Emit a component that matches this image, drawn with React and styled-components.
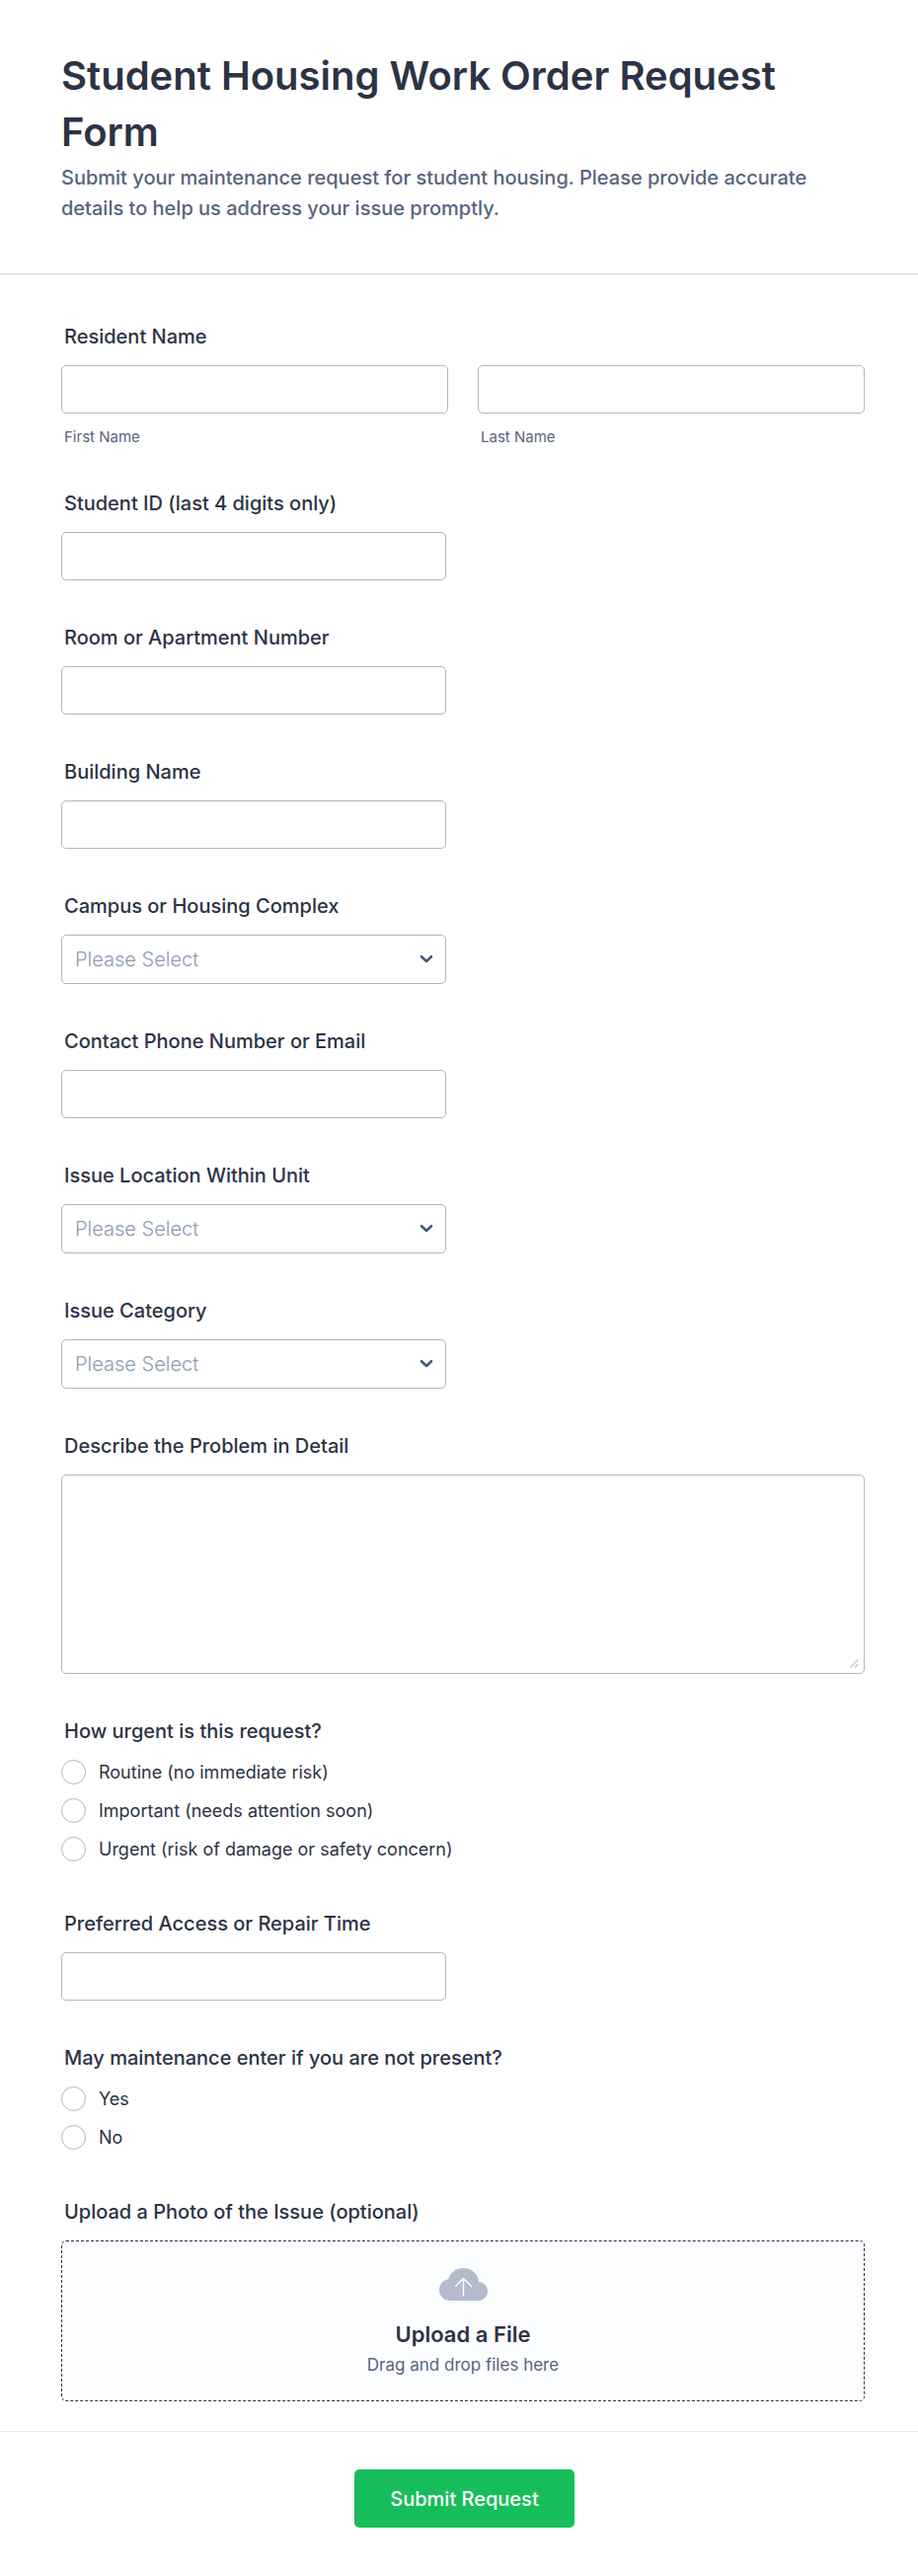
import React from "react";
import styled, { createGlobalStyle } from "styled-components";

const ink = "#2c3345";
const muted = "#57647e";
const line = "#b0b6c8";

const GlobalStyle = createGlobalStyle`
  *, *::before, *::after { box-sizing: border-box; }
  body {
    margin: 0;
    background: #fff;
    color: ${ink};
    font-family: Inter, "Liberation Sans", sans-serif;
  }
`;

const Form = styled.form`
  display: flex;
  flex-direction: column;
`;

const Header = styled.header`
  padding: 48px 54px 50px 62px;
  border-bottom: 1px solid #d3d8e0;
`;

const Title = styled.h1`
  margin: 0 0 3px;
  font-size: 40px;
  line-height: 57px;
  font-weight: 600;
`;

const Subtitle = styled.p`
  margin: 0;
  color: ${muted};
  font-size: 20px;
  line-height: 31px;
  font-weight: 500;
`;

const Fields = styled.div`
  display: flex;
  flex-direction: column;
  gap: 46px;
  padding: 51px 54px 30px 62px;
`;

const FieldBox = styled.div`
  display: flex;
  flex-direction: column;
  gap: 17px;
`;

const Label = styled.label`
  padding-left: 3px;
  font-size: 20px;
  line-height: 24px;
  font-weight: 500;
`;

const NameRow = styled.div`
  display: grid;
  grid-template-columns: 1fr 1fr;
  gap: 30px;
`;

const NamePart = styled.div`
  display: flex;
  flex-direction: column;
  gap: 15px;
`;

const SubLabel = styled.label`
  padding-left: 3px;
  color: ${muted};
  font-size: 15px;
  line-height: 18px;
`;

const TextInput = styled.input`
  width: 100%;
  max-width: ${(p) => (p.$wide ? "none" : "390px")};
  height: 49px;
  padding: 0 14px;
  border: 1px solid ${line};
  border-radius: 5px;
  background: #fff;
  color: ${ink};
  font: inherit;
  font-size: 20px;
`;

const SelectWrap = styled.div`
  position: relative;
  max-width: 390px;

  svg {
    position: absolute;
    right: 13px;
    top: 20px;
    pointer-events: none;
  }
`;

const Select = styled.select`
  display: block;
  appearance: none;
  width: 100%;
  height: 50px;
  padding: 0 40px 0 13px;
  border: 1px solid ${line};
  border-radius: 5px;
  background: #fff;
  color: #8d9bb3;
  font: inherit;
  font-size: 20px;
  font-weight: 300;
`;

const AreaWrap = styled.div`
  position: relative;

  svg {
    position: absolute;
    right: 5px;
    bottom: 5px;
    pointer-events: none;
  }
`;

const TextArea = styled.textarea`
  display: block;
  width: 100%;
  height: 202px;
  padding: 12px 14px;
  border: 1px solid ${line};
  border-radius: 5px;
  background: #fff;
  color: ${ink};
  font: inherit;
  font-size: 20px;
  resize: none;
`;

const Options = styled.div`
  display: flex;
  flex-direction: column;
  align-items: flex-start;
  gap: 14px;
  padding-bottom: 5px;
`;

const Option = styled.label`
  display: flex;
  align-items: center;
  gap: 13px;
  font-size: 18px;
  line-height: 25px;
`;

const Radio = styled.input`
  appearance: none;
  flex: none;
  width: 25px;
  height: 25px;
  margin: 0;
  border: 1px solid ${line};
  border-radius: 50%;
  background: #fff;

  &:checked { border: 8px solid #2e69ff; }
`;

const DropZone = styled.label`
  position: relative;
  display: flex;
  flex-direction: column;
  align-items: center;
  height: 163px;
  padding-top: 27px;
  border: 1px dashed ${ink};
  border-radius: 5px;
  background: #fcfdff;
  cursor: pointer;
`;

const FileInput = styled.input`
  position: absolute;
  inset: 0;
  width: 100%;
  height: 100%;
  opacity: 0;
`;

const DropTitle = styled.span`
  margin-top: 20px;
  font-size: 22px;
  line-height: 28px;
  font-weight: 600;
`;

const DropHint = styled.span`
  margin-top: 5px;
  color: ${muted};
  font-size: 17px;
  line-height: 24px;
`;

const Footer = styled.footer`
  display: flex;
  justify-content: center;
  padding: 38px 54px 49px 65px;
  border-top: 1px solid #e3e8ef;
`;

const Submit = styled.button`
  min-width: 223px;
  height: 59px;
  padding: 0 36px;
  border: 0;
  border-radius: 5px;
  background: #18bd5b;
  color: #fff;
  font: inherit;
  font-size: 20px;
  font-weight: 500;
`;

function TextField({ id, label }) {
  return (
    <FieldBox>
      <Label htmlFor={id}>{label}</Label>
      <TextInput id={id} name={id} type="text" />
    </FieldBox>
  );
}

function SelectField({ id, label }) {
  return (
    <FieldBox>
      <Label htmlFor={id}>{label}</Label>
      <SelectWrap>
        <Select id={id} name={id} defaultValue="">
          <option value="">Please Select</option>
        </Select>
        <svg width="14" height="10" viewBox="0 0 14 10" fill="none" aria-hidden="true">
          <path d="M2 2.2 7 7l5-4.8" stroke="#4a587e" strokeWidth="2.6" strokeLinecap="round" strokeLinejoin="round" />
        </svg>
      </SelectWrap>
    </FieldBox>
  );
}

function RadioField({ id, label, options }) {
  return (
    <FieldBox role="radiogroup" aria-labelledby={id}>
      <Label as="div" id={id}>{label}</Label>
      <Options>
        {options.map((text) => (
          <Option key={text}>
            <Radio type="radio" name={id} value={text} />
            {text}
          </Option>
        ))}
      </Options>
    </FieldBox>
  );
}

export default function App() {
  return (
    <Form onSubmit={(e) => e.preventDefault()}>
      <GlobalStyle />
      <Header>
        <Title>Student Housing Work Order Request Form</Title>
        <Subtitle>
          Submit your maintenance request for student housing. Please provide accurate details to help us
          address your issue promptly.
        </Subtitle>
      </Header>

      <Fields>
        <FieldBox role="group" aria-labelledby="resident">
          <Label as="div" id="resident">Resident Name</Label>
          <NameRow>
            <NamePart>
              <TextInput $wide id="first" name="first" type="text" />
              <SubLabel htmlFor="first">First Name</SubLabel>
            </NamePart>
            <NamePart>
              <TextInput $wide id="last" name="last" type="text" />
              <SubLabel htmlFor="last">Last Name</SubLabel>
            </NamePart>
          </NameRow>
        </FieldBox>
        <TextField id="studentId" label="Student ID (last 4 digits only)" />
        <TextField id="room" label="Room or Apartment Number" />
        <TextField id="building" label="Building Name" />
        <SelectField id="campus" label="Campus or Housing Complex" />
        <TextField id="contact" label="Contact Phone Number or Email" />
        <SelectField id="location" label="Issue Location Within Unit" />
        <SelectField id="category" label="Issue Category" />
        <FieldBox>
          <Label htmlFor="details">Describe the Problem in Detail</Label>
          <AreaWrap>
            <TextArea id="details" name="details" />
            <svg width="11" height="11" viewBox="0 0 11 11" fill="none" aria-hidden="true">
              <path d="M1.5 9.5l8-8M6 9.5l3.5-3.5" stroke="#c3c6d6" strokeWidth="1.3" />
            </svg>
          </AreaWrap>
        </FieldBox>
        <RadioField
          id="urgency"
          label="How urgent is this request?"
          options={[
            "Routine (no immediate risk)",
            "Important (needs attention soon)",
            "Urgent (risk of damage or safety concern)",
          ]}
        />
        <TextField id="time" label="Preferred Access or Repair Time" />
        <RadioField id="entry" label="May maintenance enter if you are not present?" options={["Yes", "No"]} />
        <FieldBox>
          <Label htmlFor="photo">Upload a Photo of the Issue (optional)</Label>
          <DropZone>
            <FileInput id="photo" name="photo" type="file" />
            <svg width="49" height="33" viewBox="0 0 49 33" fill="none" aria-hidden="true">
              <path
                d="M11 33C4.900 33 0 28.300 0 22.200 0 16.500 4 12 9.300 11.200 11 4.700 17 0 24.500 0 32.800 0 39.300 5.800 40.100 13.800 45 14.300 49 18.300 49 23.400 49 28.700 44.800 33 39.400 33Z"
                fill="#b3bbcc"
              />
              <path d="M24.500 28V10.500M16.500 18.500l8-8 8 8" stroke="#fcfdff" strokeWidth="1.500" strokeLinecap="round" strokeLinejoin="round" />
            </svg>
            <DropTitle>Upload a File</DropTitle>
            <DropHint>Drag and drop files here</DropHint>
          </DropZone>
        </FieldBox>
      </Fields>

      <Footer>
        <Submit type="submit">Submit Request</Submit>
      </Footer>
    </Form>
  );
}
